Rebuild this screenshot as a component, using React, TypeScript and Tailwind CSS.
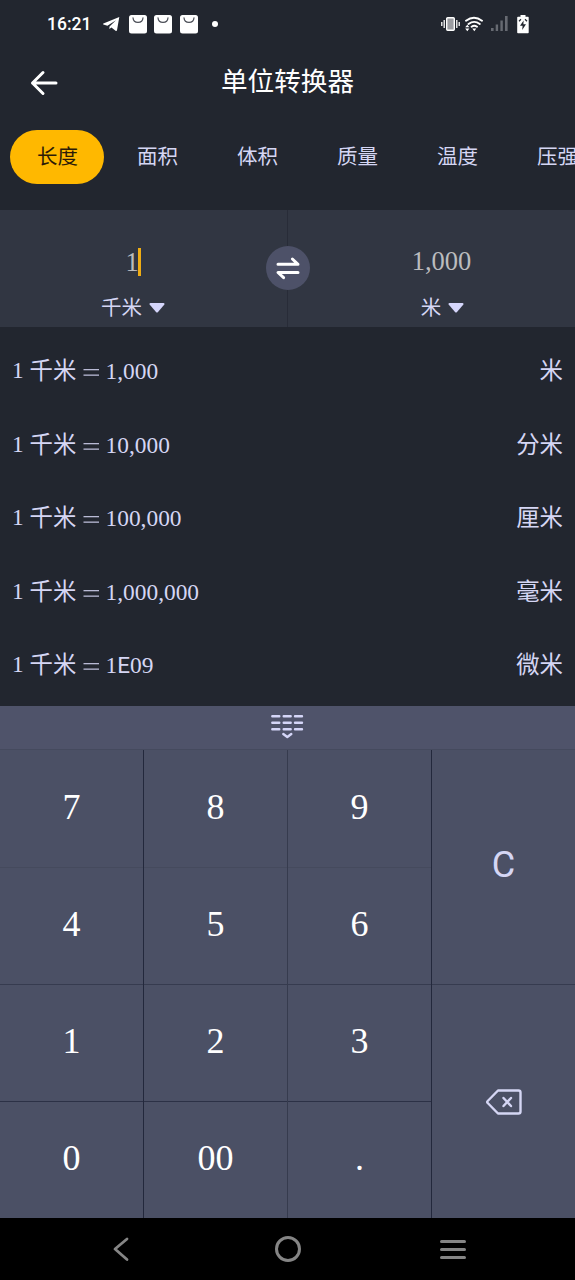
import { ReactElement } from "react";

const tabs = ["长度", "面积", "体积", "质量", "温度", "压强"];

const results = [
  { value: "1,000", unit: "米" },
  { value: "10,000", unit: "分米" },
  { value: "100,000", unit: "厘米" },
  { value: "1,000,000", unit: "毫米" },
  { value: "1E09", unit: "微米" },
];

const keys = [
  ["7", "8", "9"],
  ["4", "5", "6"],
  ["1", "2", "3"],
  ["0", "00", "."],
];

const rowLines = ["border-[#454a5d]", "border-[#363b4f]", "border-[#2c3146]", "border-transparent"];
const colLines = ["border-[#23283c]", "border-[#363b4e]", "border-[#23283c]"];

const BagIcon = () => (
  <svg width="18" height="19" viewBox="0 0 18 19" fill="none">
    <rect width="18" height="18.5" rx="2.5" fill="#fff" />
    <path d="M4 2.800c.4 6.200 9.600 6.200 10 0" stroke="#4b4e57" strokeWidth="1.2" strokeLinecap="round" />
  </svg>
);

const StatusBar = (): ReactElement => (
  <div className="flex h-12 items-center pl-[47px] pr-[46.5px] text-white">
    <span className="w-[56px] font-[Roboto,sans-serif] text-[17.5px] font-medium">16:21</span>
    <svg width="17" height="16" viewBox="0 0 17 16" fill="#fff">
      <path d="M16.300 1 .4 7.600c-.5.3-.4.700 0 .9l4 1.300L13 4.200 6.500 10.500l-.1 2.600 2-1.500 4.200 3.200c.7.400 1.200.1 1.400-.6z" />
    </svg>
    <div className="ml-[8.500px] flex gap-[7.700px]">
      <BagIcon />
      <BagIcon />
      <BagIcon />
    </div>
    <div className="ml-[14px] size-[6px] rounded-full bg-white" />
    <div className="ml-auto flex items-center">
      <svg width="19" height="16" viewBox="0 0 19 16" fill="none" stroke="#fff">
        <rect x="5.700" y="1.700" width="7.600" height="12.600" rx="1" fill="#9b9ca1" strokeWidth="1.400" />
        <path d="M3.200 4v8M.8 6v4M15.800 4v8M18.200 6v4" strokeWidth="1.300" />
      </svg>
      <svg className="ml-[5px]" width="18" height="16" viewBox="0 0 18 16" fill="none" stroke="#fff">
        <path d="M1 4.700Q9-1.300 17 4.700M3.500 8Q9.200 3.700 14.800 8M6.600 10.700Q9.300 8.700 12 10.700" strokeWidth="1.900" strokeLinecap="round" />
        <path d="M9.300 15.300 7.300 12.500h4zM2.300 8.700l2.100 2.600H.2zM2.300 15.200l2.100-2.700H.2z" fill="#fff" stroke="none" />
      </svg>
      <svg className="ml-[8px]" width="17" height="16" viewBox="0 0 17 16" fill="#676a72">
        <rect x="0" y="12" width="2.600" height="3" />
        <rect x="4.700" y="8.500" width="2.400" height="6.500" />
        <rect x="9.400" y="4.500" width="2.400" height="10.500" />
        <rect x="14" y="0" width="2.600" height="15" />
      </svg>
      <svg className="ml-[9px]" width="12" height="19" viewBox="0 0 12 19">
        <path d="M3.500 0h5v1.800H11q.7 0 .7.700v15q0 .8-.7.800H1q-.8 0-.8-.8v-15q0-.700.8-.700h2.500z" fill="#fff" />
        <path d="M6.600 5.500 3 10.700h2.600L5.200 15 9 9.200H6.400z" fill="#22262f" />
        <path d="M2 6.200 4 4.300M8 4.300l2 1.900" stroke="#22262f" strokeWidth="1.200" />
      </svg>
    </div>
  </div>
);

const Header = () => (
  <div className="grid h-[70px] grid-cols-[1fr_auto_1fr] items-center">
    <svg className="ml-[30px]" width="28" height="26" viewBox="0 0 28 26" fill="none" stroke="#fff" strokeWidth="3" strokeLinecap="round" strokeLinejoin="round">
      <path d="M26 13H2.500M13 2.500 2.500 13 13 23.500" />
    </svg>
    <h1 className="pb-[5px] text-[26.6px] leading-none text-white">单位转换器</h1>
  </div>
);

const Tabs = () => (
  <div className="flex h-[92px] gap-[6px] overflow-hidden pl-[10px] pt-[12px]">
    {tabs.map((tab, i) => (
      <button
        key={tab}
        className={`flex h-[54px] w-[94px] shrink-0 items-center justify-center rounded-full pb-[4px] pl-px text-[20.5px] ${
          i === 0 ? "bg-[#ffb800] text-[#2c1b08]" : "text-[#d5d6f4]"
        }`}
      >
        {tab}
      </button>
    ))}
  </div>
);

const UnitPicker = ({ unit }: { unit: string }) => (
  <button className="flex items-center gap-[7px] text-[20.5px] leading-[30px] text-[#d5d6f4]">
    {unit}
    <svg className="mt-[3px]" width="16" height="10" viewBox="0 0 16 10" fill="#d5d6fb">
      <path d="M1.500 0h13q1.600.4.700 1.700L9 8.900q-1 1-2 0L.8 1.700Q-.1.400 1.500 0z" />
    </svg>
  </button>
);

const Converter = () => (
  <div className="relative flex h-[117px] bg-[#313642]">
    <div className="flex w-[288px] flex-col items-center border-r border-[#282c38] pr-[21px] pt-[38px]">
      <div className="flex h-7 items-center">
        <span className="font-['Liberation_Serif',serif] text-[26.5px] leading-7 text-[#bbbcbe]">1</span>
        <span className="-ml-px h-7 w-[3px] bg-[#efad14]" />
      </div>
      <div className="mt-[15px]">
        <UnitPicker unit="千米" />
      </div>
    </div>
    <div className="flex flex-1 flex-col items-center pl-[21px] pt-[37px]">
      <div className="h-7 pr-px font-['Liberation_Serif',serif] text-[26.5px] leading-7 text-[#bbbcbe]">1,000</div>
      <div className="mt-[16px] pl-px">
        <UnitPicker unit="米" />
      </div>
    </div>
    <button className="absolute left-[266px] top-[36px] flex size-11 items-center justify-center rounded-full bg-[#4d5168]">
      <svg width="24" height="24" viewBox="0 0 24 24" fill="none" stroke="#fff" strokeWidth="3" strokeLinecap="round" strokeLinejoin="round">
        <path d="M2 8.300h20l-5.600-5.300M22 16.500H2l5.600 5.200" />
      </svg>
    </button>
  </div>
);

const ResultList = () => (
  <div className="h-[379px] overflow-hidden px-3 pt-[7px] text-[23.4px] text-[#d5d6f4]">
    {results.map(({ value, unit }) => (
      <div key={unit} className="flex h-[73.5px] items-center justify-between leading-none">
        <div className="flex items-center">
          <span className="w-[17.5px] font-['Liberation_Serif',serif]">1</span>
          <span className="w-[53px] pb-[2px]">千米</span>
          <svg width="17" height="8" viewBox="0 0 17 8" className="mr-[6px] mt-[5px]" fill="#b9bad5">
            <rect x=".5" y="0" width="15.500" height="1.300" />
            <rect x=".5" y="5.500" width="15.500" height="1.300" />
          </svg>
          <span className="mt-[2px] font-['Liberation_Serif',serif]">
            {value.split("E").map((part, i) => (
              <span key={i}>
                {i > 0 && <span className="font-[Roboto,sans-serif] text-[22.5px]">E</span>}
                {part}
              </span>
            ))}
          </span>
        </div>
        <span className="pb-[2px]">{unit}</span>
      </div>
    ))}
  </div>
);

const Keypad = () => (
  <div className="bg-[#4b5065]">
    <div className="flex h-11 justify-center border-b border-[#454a5e] bg-[#4f536a] pr-px pt-[8px]">
      <svg width="34" height="26" viewBox="0 0 34 26" fill="none" stroke="#d5d6f8" strokeLinecap="round" strokeLinejoin="round">
        <path
          d="M2.300 2.200h7M13.700 2.200h7M25 2.200h7M2.300 8.800h7M13.700 8.800h7M25 8.800h7M2.300 15.300h7M13.700 15.300h7M25 15.300h7"
          strokeWidth="2.400"
        />
        <path d="m13.300 20 4 3 4-3" strokeWidth="2.400" />
      </svg>
    </div>
    <div className="flex h-[468px]">
      <div className="w-[432px]">
        {keys.map((row, r) => (
          <div key={r} className="flex h-[117px] first:h-[118px] last:h-[116px]">
            {row.map((key, c) => (
              <div key={key} className={`w-36 border-r ${colLines[c]}`}>
                <button
                  className={`flex h-full w-full items-center justify-center border-b pb-[4px] font-['Liberation_Serif',serif] text-4xl text-white ${rowLines[r]}`}
                >
                  {key}
                </button>
              </div>
            ))}
          </div>
        ))}
      </div>
      <div className="flex-1">
        <button className="flex h-[235px] w-full items-center justify-center border-b border-[#363b4f] pb-[4px] font-[Roboto,sans-serif] text-4xl text-[#d5d6f4]">
          C
        </button>
        <button className="flex h-[233px] w-full items-center justify-center">
          <svg width="36" height="26" viewBox="0 0 36 26" fill="none" stroke="#d5d6f4" strokeWidth="2.400" strokeLinecap="round" strokeLinejoin="round">
            <path d="M12 1.500h20.500q2 0 2 2v19q0 2-2 2H12L1.700 14q-1-1 0-2z" />
            <path d="m17.500 9 7.500 8M25 9l-7.500 8" />
          </svg>
        </button>
      </div>
    </div>
  </div>
);

const SystemNav = () => (
  <div className="flex h-[62px] items-center bg-black text-[#858585]">
    <svg className="ml-[113px]" width="17" height="26" viewBox="0 0 17 26" fill="none" stroke="currentColor" strokeWidth="2.800" strokeLinecap="round" strokeLinejoin="round">
      <path d="M14 3 2 13l12 10.500" />
    </svg>
    <div className="ml-[145px] size-[26px] rounded-full border-3 border-current" />
    <div className="ml-[139px] flex flex-col gap-[5.3px] pt-px">
      <div className="h-[3px] w-[26px] rounded-full bg-current" />
      <div className="h-[3px] w-[26px] rounded-full bg-current" />
      <div className="h-[3px] w-[26px] rounded-full bg-current" />
    </div>
  </div>
);

const App = (): ReactElement => {
  return (
    <div className="h-[1280px] w-[575px] overflow-hidden bg-[#22262f] font-['Noto_Sans_CJK_SC',sans-serif]">
      <StatusBar />
      <Header />
      <Tabs />
      <Converter />
      <ResultList />
      <Keypad />
      <SystemNav />
    </div>
  );
};

export default App;
